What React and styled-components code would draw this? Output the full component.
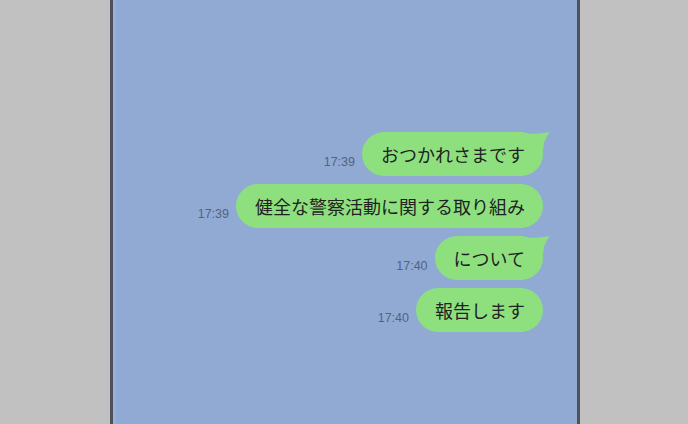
import styled, { createGlobalStyle } from 'styled-components'

const GlobalStyle = createGlobalStyle`
  html, body {
    margin: 0;
    padding: 0;
    background: #c1c1c1;
  }
`

const messages = [
  { time: '17:39', text: 'おつかれさまです', tail: true },
  { time: '17:39', text: '健全な警察活動に関する取り組み', tail: false },
  { time: '17:40', text: 'について', tail: true },
  { time: '17:40', text: '報告します', tail: false }
]

const Page = styled.div`
  display: flex;
  height: 424px;
  padding-left: 110px;
`

const Frame = styled.main`
  width: 470px;
  height: 424px;
  background: #90aad4;
  border-left: 3px solid #4e5157;
  border-right: 3px solid #4e5157;
  box-shadow: inset 3px 0 0 #98b1dc;
  display: flex;
  flex-direction: column;
  align-items: flex-end;
  gap: 8px;
  padding: 132px 34px 0 0;
  box-sizing: border-box;
`

const Row = styled.div`
  display: flex;
  align-items: flex-end;
  gap: 7px;
`

const Time = styled.span`
  font-family: 'Liberation Sans', Arial, sans-serif;
  font-size: 12.5px;
  color: #55627f;
  margin-bottom: 7px;
`

const Bubble = styled.div`
  position: relative;
  height: 44px;
  display: flex;
  align-items: center;
  padding: 0 18px 0 19px;
  border-radius: 22px;
  background: #8ee07f;
  font-family: 'Noto Sans CJK JP', 'Noto Sans', sans-serif;
  font-size: 18px;
  color: #1f221f;
  white-space: nowrap;
`

const Tail = styled.svg`
  position: absolute;
  top: 0;
  right: -7px;
  width: 22px;
  height: 18px;
`

const Message = ({ time, text, tail }) => (
  <Row>
    <Time>{time}</Time>
    <Bubble>
      {tail && (
        <Tail viewBox='0 0 22 18'>
          <path d='M0 2 Q12 2 22 0 Q16 6 15 18 L0 18 Z' fill='#8ee07f' />
        </Tail>
      )}
      {text}
    </Bubble>
  </Row>
)

export default function App () {
  return (
    <>
      <GlobalStyle />
      <Page>
        <Frame>
          {messages.map((m, i) => <Message key={i} {...m} />)}
        </Frame>
      </Page>
    </>
  )
}
